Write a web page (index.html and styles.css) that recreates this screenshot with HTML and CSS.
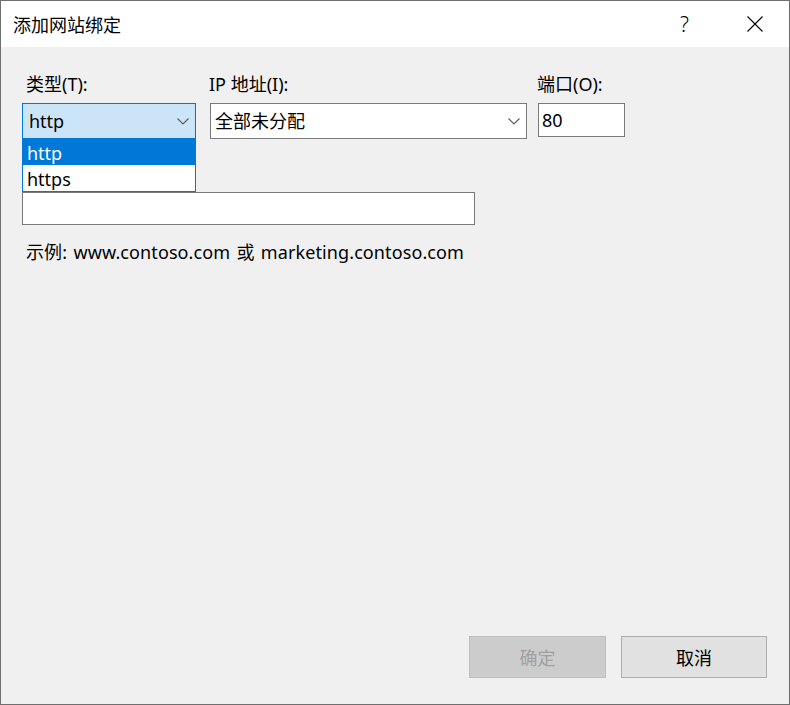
FILE: index.html
```html
<!DOCTYPE html>
<html lang="zh-CN">
<head>
<meta charset="utf-8">
<title>添加网站绑定</title>
<link rel="stylesheet" href="styles.css">
</head>
<body>
<div class="window">
  <div class="titlebar">
    <span class="title">添加网站绑定</span>
    <div class="controls">
      <span class="ctl help">?</span>
      <span class="ctl close">
        <svg width="16" height="16" viewBox="0 0 16 16"><path d="M0.5 0.5 L15.5 15.5 M15.5 0.5 L0.5 15.5" stroke="#000" stroke-width="1.1" fill="none"/></svg>
      </span>
    </div>
  </div>
  <div class="content">
    <div class="row">
      <div class="field type">
        <span class="lbl indent">类型(T):</span>
        <div class="combo focused">
          <span class="val">http</span>
          <svg class="chev" width="12" height="7" viewBox="0 0 12 7"><path d="M0.5 0.5 L6 6 L11.5 0.5" stroke="#5f5f5f" stroke-width="1.2" fill="none"/></svg>
        </div>
        <ul class="dropdown">
          <li class="sel">http</li>
          <li>https</li>
        </ul>
      </div>
      <div class="field ip">
        <span class="lbl">IP 地址(I):</span>
        <div class="combo">
          <span class="val">全部未分配</span>
          <svg class="chev" width="12" height="7" viewBox="0 0 12 7"><path d="M0.5 0.5 L6 6 L11.5 0.5" stroke="#5f5f5f" stroke-width="1.2" fill="none"/></svg>
        </div>
      </div>
      <div class="field port">
        <span class="lbl">端口(O):</span>
        <div class="textbox portbox"><span class="val">80</span></div>
      </div>
    </div>
    <div class="textbox host"></div>
    <p class="example">示例: www.contoso.com 或 marketing.contoso.com</p>
    <div class="buttons">
      <button class="btn disabled" type="button">确定</button>
      <button class="btn" type="button">取消</button>
    </div>
  </div>
</div>
</body>
</html>
```
FILE: styles.css
```css
* { box-sizing: border-box; }
html, body { margin: 0; padding: 0; }
body {
  width: 790px;
  height: 705px;
  overflow: hidden;
  font-family: "Noto Sans", "Noto Sans CJK SC", sans-serif;
  font-size: 18px;
  color: #000;
  background: #f0f0f0;
}
.window {
  width: 790px;
  height: 705px;
  border: 1px solid #6f6f6f;
  background: #f0f0f0;
  display: flex;
  flex-direction: column;
}
.titlebar {
  height: 46px;
  background: #fff;
  display: flex;
  align-items: center;
  padding-left: 12px;
  flex-shrink: 0;
}
.title {
  flex: 1;
  font-size: 18px;
  line-height: 24px;
  font-family: "Noto Sans CJK SC", sans-serif;
}
.controls { display: flex; height: 46px; }
.ctl {
  width: 69px;
  height: 46px;
  display: flex;
  align-items: center;
  justify-content: center;
}
.help {
  font-family: "Noto Sans", sans-serif;
  font-weight: 300;
  font-size: 21px;
  padding-right: 2px;
}
.close svg { display: block; margin-left: 1px; }
.content {
  flex: 1;
  display: flex;
  flex-direction: column;
  padding: 25px 22px 26px 21px;
}
.row {
  display: flex;
  align-items: flex-start;
}
.field {
  display: flex;
  flex-direction: column;
  position: relative;
}
.type { width: 174px; margin-right: 14px; }
.ip { width: 317px; margin-right: 11px; }
.port { width: 87px; }
.lbl {
  line-height: 24px;
  height: 24px;
  margin-bottom: 7px;
  white-space: nowrap;
  margin-left: -1px;
}
.lbl.indent { margin-left: 4px; }
.combo {
  height: 36px;
  border: 1px solid #7a7a7a;
  background: #fff;
  display: flex;
  align-items: center;
  padding: 0 6px 0 4px;
}
.combo.focused {
  background: #cce4f7;
  border-color: #0078d7;
  padding-left: 6px;
}
.val {
  flex: 1;
  line-height: 24px;
  white-space: nowrap;
}
.chev { display: block; flex-shrink: 0; margin-top: 1px; }
.textbox {
  border: 1px solid #7a7a7a;
  background: #fff;
}
.portbox {
  height: 34px;
  display: flex;
  align-items: center;
  padding-left: 3px;
}
.dropdown {
  position: absolute;
  left: 0;
  top: 66px;
  width: 174px;
  margin: 0;
  padding: 0;
  list-style: none;
  background: #fff;
  border: 1px solid #0078d7;
  border-top: none;
}
.dropdown li {
  height: 26px;
  line-height: 26px;
  padding: 1px 0 0 4px;
}
.dropdown li.sel {
  height: 27px;
  line-height: 27px;
  padding-top: 2px;
  background: #0078d7;
  color: #fff;
}
.host {
  width: 453px;
  height: 33px;
  margin-top: 53px;
}
.example {
  margin: 15px 0 0 4px;
  line-height: 24px;
  color: #000;
  letter-spacing: 0.1px;
  word-spacing: 1.5px;
}
.buttons {
  margin-top: auto;
  display: flex;
  justify-content: flex-end;
  gap: 15px;
}
.btn {
  font-family: "Noto Sans CJK SC", sans-serif;
  font-size: 18px;
  height: 42px;
  width: 146px;
  background: #e1e1e1;
  border: 1px solid #adadad;
  color: #000;
  padding: 0;
}
.btn.disabled {
  width: 137px;
  background: #cccccc;
  border-color: #bfbfbf;
  color: #a0a0a0;
}
```
